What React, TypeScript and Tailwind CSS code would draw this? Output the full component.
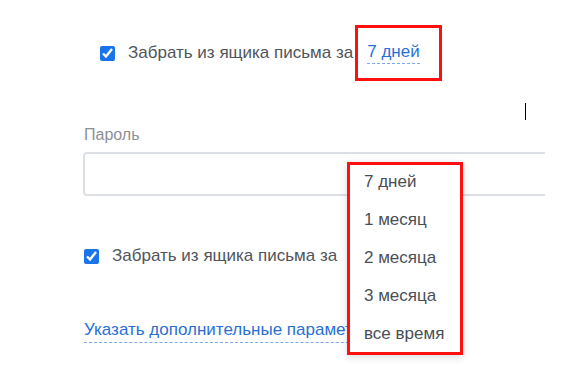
import React from "react";

function Check() {
  return (
    <input
      type="checkbox"
      defaultChecked
      className="w-[15px] h-[15px] accent-[#1a73e8] shrink-0"
    />
  );
}

export default function App() {
  const items = ["7 дней", "1 месяц", "2 месяца", "3 месяца", "все время"];
  return (
    <div className="relative w-[567px] h-[375px] overflow-hidden bg-white font-['Liberation_Sans',Arial,sans-serif] text-[17px] text-[#50555b]">
      <div className="pl-[83px] pt-[25px] flex flex-col">
        <div className="flex items-center ml-[17px] h-[56px]">
          <Check />
          <span className="ml-[13px] leading-[20px]">Забрать из ящика письма за</span>
          <div className="ml-[2px] w-[87px] h-[56px] border-[3px] border-[#ff1010] flex items-center pl-[9px]">
            <span className="leading-[20px] pb-[1px] border-b border-dashed border-[#7ba9ee] text-[#2a6fd8] whitespace-nowrap">
              7 дней
            </span>
          </div>
        </div>

        <div className="mt-[44px] ml-[1px] leading-[20px] text-[16px] text-[#8b9096]">Пароль</div>

        <div className="mt-[7px] w-[462px] overflow-hidden">
          <div className="w-[490px] h-[44px] border-2 border-[#dcdfe3] rounded-[4px] bg-white" />
        </div>

        <div className="mt-[49px] flex items-center ml-[1px] h-[22px]">
          <Check />
          <span className="ml-[13px] leading-[20px]">Забрать из ящика письма за</span>
        </div>

        <div className="mt-[50px] ml-[1px] w-[263px] overflow-hidden">
          <span className="inline-block leading-[20px] pb-[2px] border-b border-dashed border-[#7ba9ee] text-[#2a6fd8] whitespace-nowrap">
            Указать дополнительные параметры
          </span>
        </div>
      </div>

      <div className="absolute left-[525px] top-[103px] w-px h-[17px] bg-black" />

      <div className="absolute left-[347px] top-[162px] w-[116px] h-[193px] border-[3px] border-[#ff1010] bg-white shadow-[0_2px_8px_rgba(0,0,0,0.15)]">
        <div className="-mt-[2px] flex flex-col">
          {items.map((t) => (
            <div key={t} className="h-[38px] flex items-center pl-[14px] text-[#4a4f55] whitespace-nowrap">
              {t}
            </div>
          ))}
        </div>
      </div>
    </div>
  );
}
